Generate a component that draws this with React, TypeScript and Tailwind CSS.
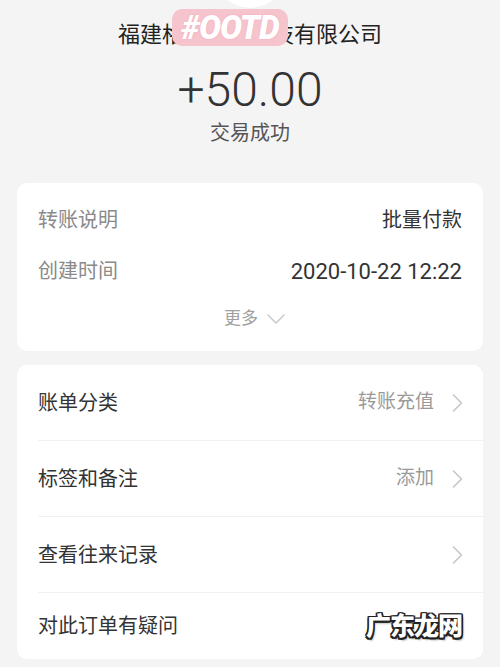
const font = "font-['Roboto','Noto_Sans_CJK_SC',sans-serif]";

type Row = { label: string; value?: string; last?: boolean };

const rows: Row[] = [
  { label: "账单分类", value: "转账充值" },
  { label: "标签和备注", value: "添加" },
  { label: "查看往来记录" },
  { label: "对此订单有疑问", last: true },
];

function Arrow() {
  return (
    <svg width="11" height="20" viewBox="0 0 11 20" fill="none" className="text-[#c6c6c6]">
      <path d="M1.5 2 L9.5 10 L1.5 18" stroke="currentColor" strokeWidth="1.6" strokeLinecap="round" strokeLinejoin="round" />
    </svg>
  );
}

function Header() {
  return (
    <div className="relative flex flex-col items-center pt-[20px]">
      {/* avatar peeking from the top */}
      <div className="absolute left-[212px] top-[-68px] h-[76px] w-[76px] rounded-full bg-white shadow-[0_0_2px_rgba(0,0,0,0.04)]" />
      <div className="h-[30px] text-[22px] leading-[30px] text-[#222]">福建格林网络科技有限公司</div>
      <div className="mt-[12px] h-[56px] text-[48px] font-light leading-[56px] text-[#333]">+50.00</div>
      <div className="mt-[1px] h-[28px] text-[20px] leading-[28px] text-[#555]">交易成功</div>
      {/* pink watermark */}
      <div className="absolute left-[172px] top-[9px] flex h-[37px] w-[116px] items-center justify-center rounded-[10px] bg-[#f6c4cd]">
        <span className="text-[33px] font-black italic leading-none tracking-[-1px] text-white [text-shadow:0_0_2px_#f0a9b6]">
          #OOTD
        </span>
      </div>
    </div>
  );
}

function DetailCard() {
  return (
    <div className="mx-[17px] mt-[36px] rounded-[10px] bg-white px-[21px] pb-[20px] pt-[23px]">
      <div className="flex h-[28px] items-center justify-between text-[20px]">
        <span className="text-[#8a8a8a]">转账说明</span>
        <span className="text-[#333]">批量付款</span>
      </div>
      <div className="mt-[23px] flex h-[28px] items-center justify-between text-[20px]">
        <span className="text-[#8a8a8a]">创建时间</span>
        <span className="text-[22px] text-[#333]">2020-10-22 12:22</span>
      </div>
      <div className="mt-[22px] flex h-[24px] items-center justify-center gap-[8px] pl-[10px]">
        <span className="text-[17px] text-[#a0a0a0]">更多</span>
        <svg width="20" height="12" viewBox="0 0 20 12" fill="none" className="text-[#c8c8c8]">
          <path d="M2 2 L10 10 L18 2" stroke="currentColor" strokeWidth="1.5" strokeLinecap="round" strokeLinejoin="round" />
        </svg>
      </div>
    </div>
  );
}

function MenuCard() {
  return (
    <div className="mx-[17px] mt-[14px] rounded-[10px] bg-white">
      {rows.map((r, i) => (
        <div key={r.label}>
          <div
            className={
              "flex items-center justify-between pl-[21px] pr-[20px] " + (r.last ? "h-[66px]" : "h-[75px]")
            }
          >
            <span className="text-[20px] text-[#333]">{r.label}</span>
            <div className="flex items-center gap-[18px]">
              {r.value && <span className="text-[19px] text-[#9a9a9a]">{r.value}</span>}
              <Arrow />
            </div>
          </div>
          {i < rows.length - 1 && <div className="ml-[21px] h-px bg-[#f1f1f1]" />}
        </div>
      ))}
    </div>
  );
}

export default function App() {
  return (
    <div className={"relative h-[667px] w-[500px] overflow-hidden bg-[#f4f4f4] " + font}>
      <Header />
      <DetailCard />
      <MenuCard />
      {/* site watermark */}
      <div className="absolute left-[366px] top-[610px] text-[25px] font-black leading-[34px] tracking-[-1px] text-white [text-shadow:-1.5px_-1.5px_0_#222,1.5px_-1.5px_0_#222,-1.5px_1.5px_0_#222,1.5px_1.5px_0_#222,0_1.5px_0_#222,0_-1.5px_0_#222,1.5px_0_0_#222,-1.5px_0_0_#222,2px_3px_2px_rgba(0,0,0,0.3)]">
        广东龙网
      </div>
    </div>
  );
}
